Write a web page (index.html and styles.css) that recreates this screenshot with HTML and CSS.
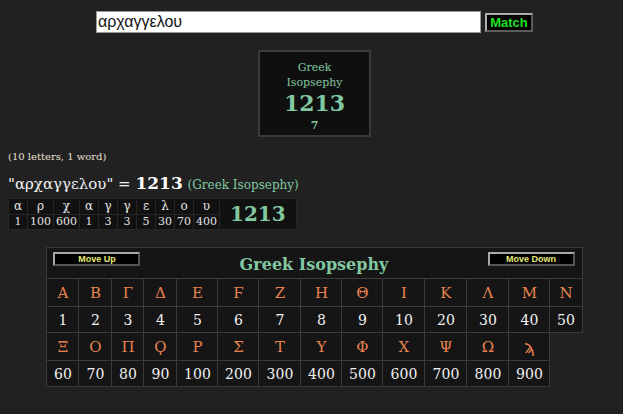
FILE: index.html
```html
<!DOCTYPE html>
<html lang="el">
<head>
<meta charset="utf-8">
<title>Greek Isopsephy</title>
<link rel="stylesheet" href="styles.css">
</head>
<body>
<div class="centered">
  <form class="search">
    <input class="query" type="text" value="αρχαγγελου">
    <button class="match" type="button">Match</button>
  </form>
  <div class="card">
    <div class="card-name">Greek<br>Isopsephy</div>
    <div class="card-total">1213</div>
    <div class="card-sub">7</div>
  </div>
</div>
<p class="meta">(10 letters, 1 word)</p>
<p class="result">"αρχαγγελου" = <b class="result-total">1213</b> <span class="system">(Greek Isopsephy)</span></p>
<table class="breakdown">
  <tr class="b-letters">
    <td>α</td><td>ρ</td><td>χ</td><td>α</td><td>γ</td><td>γ</td><td>ε</td><td>λ</td><td>ο</td><td>υ</td>
    <td class="b-total" rowspan="2">1213</td>
  </tr>
  <tr class="b-values">
    <td>1</td><td>100</td><td>600</td><td>1</td><td>3</td><td>3</td><td>5</td><td>30</td><td>70</td><td>400</td>
  </tr>
</table>
<div class="centered">
<table class="chart">
  <colgroup>
    <col class="c32"><col class="c33"><col class="c32"><col class="c33"><col class="c41"><col class="c41"><col class="c42"><col class="c41"><col class="c41"><col class="c42"><col class="c42"><col class="c42"><col class="c41"><col class="c32">
  </colgroup>
  <tr>
    <td class="chart-head" colspan="14">
      <div class="head-bar">
        <button class="move" type="button">Move Up</button>
        <span class="chart-title">Greek Isopsephy</span>
        <button class="move" type="button">Move Down</button>
      </div>
    </td>
  </tr>
  <tr class="letters">
    <td>Α</td><td>Β</td><td>Γ</td><td>Δ</td><td>Ε</td><td>Ϝ</td><td>Ζ</td><td>Η</td><td>Θ</td><td>Ι</td><td>Κ</td><td>Λ</td><td>Μ</td><td>Ν</td>
  </tr>
  <tr class="values">
    <td>1</td><td>2</td><td>3</td><td>4</td><td>5</td><td>6</td><td>7</td><td>8</td><td>9</td><td>10</td><td>20</td><td>30</td><td>40</td><td>50</td>
  </tr>
  <tr class="letters">
    <td>Ξ</td><td>Ο</td><td>Π</td><td>Ϙ</td><td>Ρ</td><td>Σ</td><td>Τ</td><td>Υ</td><td>Φ</td><td>Χ</td><td>Ψ</td><td>Ω</td><td class="sampi">ϡ</td>
  </tr>
  <tr class="values">
    <td>60</td><td>70</td><td>80</td><td>90</td><td>100</td><td>200</td><td>300</td><td>400</td><td>500</td><td>600</td><td>700</td><td>800</td><td>900</td>
  </tr>
</table>
</div>
</body>
</html>
```

FILE: styles.css
```css
html, body {
  background: #212121;
}
body {
  margin: 8px;
  font-family: "DejaVu Serif", serif;
  color: #e6e0d6;
}
.centered {
  display: flex;
  flex-direction: column;
  align-items: center;
  padding-left: 6px;
}
.search {
  display: flex;
  align-items: center;
  gap: 4px;
  margin: 3px 0 0;
}
.query {
  box-sizing: border-box;
  width: 385px;
  height: 22px;
  margin: 0;
  padding: 0 1px;
  border: 1px solid #9a9a9a;
  background: #fff;
  color: #111;
  font-family: "Liberation Sans", Arial, sans-serif;
  font-size: 16px;
}
.match {
  box-sizing: border-box;
  width: 48px;
  height: 19px;
  margin: 0;
  padding: 0;
  background: #000;
  border: 2px outset #b0b0b0;
  color: #22e022;
  font-family: "Liberation Sans", Arial, sans-serif;
  font-weight: bold;
  font-size: 13px;
  line-height: 15px;
}
.card {
  box-sizing: border-box;
  width: 113px;
  height: 87px;
  margin-top: 17px;
  padding-top: 8px;
  background: #0f0f0f;
  border: 2px solid #3a3a3a;
  text-align: center;
  color: #82c8a0;
}
.card-name {
  font-size: 11px;
  line-height: 15px;
}
.card-total {
  font-size: 22px;
  font-weight: bold;
  line-height: 26px;
}
.card-sub {
  font-size: 11px;
  font-weight: bold;
  line-height: 20px;
}
.meta {
  margin: 13px 0 0;
  font-size: 10px;
  line-height: 14px;
  color: #e8e0d2;
}
.result {
  margin: 9px 0 0;
  font-size: 15px;
  line-height: 20px;
  color: #f0f0f0;
}
.result-total {
  font-size: 17px;
  color: #ffffff;
}
.system {
  font-size: 12px;
  color: #82c8a0;
}
.breakdown {
  margin-top: 3px;
  border-collapse: collapse;
  background: #111;
}
.breakdown td {
  min-width: 14px;
  padding: 0 2px;
  border: 1px solid #262626;
  text-align: center;
  font-size: 11px;
  line-height: 14px;
  color: #e4e4e4;
}
.b-letters td {
  font-size: 12px;
  line-height: 15px;
}
.breakdown td.b-total {
  padding: 0 10px;
  font-size: 20px;
  font-weight: bold;
  color: #82c8a0;
  line-height: 22px;
}
.chart {
  margin-top: 17px;
  width: 535px;
  table-layout: fixed;
  border-collapse: collapse;
}
.c32 { width: 32px; }
.c33 { width: 33px; }
.c41 { width: 41px; }
.c42 { width: 42px; }
.chart td {
  background: #151515;
  border: 1px solid #3a3a3a;
  text-align: center;
  padding: 0;
}
.chart td.chart-head {
  padding: 4px 7px 0 6px;
  height: 26px;
  vertical-align: top;
}
.head-bar {
  display: flex;
  justify-content: space-between;
  align-items: flex-start;
}
.move {
  box-sizing: border-box;
  width: 87px;
  height: 14px;
  margin: 0;
  padding: 0;
  background: #000;
  border: 2px outset #a8a8a8;
  color: #e6e872;
  font-family: "Liberation Sans", Arial, sans-serif;
  font-weight: bold;
  font-size: 9px;
  line-height: 10px;
}
.chart-title {
  font-size: 16px;
  font-weight: bold;
  line-height: 25px;
  color: #82c8a0;
}
.letters td {
  height: 27px;
  font-size: 15px;
  color: #e8834e;
}
.letters td.sampi {
  font-family: "DejaVu Sans", sans-serif;
  font-size: 17px;
}
.values td {
  height: 25px;
  font-size: 14px;
  color: #f2f2f2;
}
```
